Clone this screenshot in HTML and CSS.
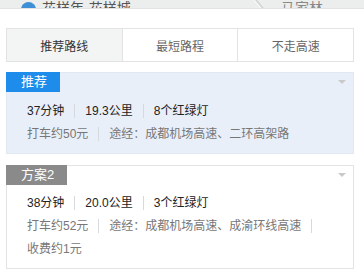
FILE: index.html
```html
<!DOCTYPE html>
<html lang="zh-CN">
<head>
  <meta charset="UTF-8">
  <meta name="viewport" content="width=device-width, initial-scale=1.0">
  <title>驾车路线</title>
  <link rel="stylesheet" href="styles.css">
</head>
<body>
  <div class="map">
    <span class="pin"></span>
    <span class="place">花样年·花样城</span>
    <span class="road"></span>
    <span class="place place-far">马家林</span>
  </div>

  <div class="panel">
    <div class="tabs">
      <div class="tab active">推荐路线</div>
      <div class="tab">最短路程</div>
      <div class="tab">不走高速</div>
    </div>

    <div class="plan plan-best">
      <span class="badge">推荐</span>
      <span class="toggle"></span>
      <div class="row main">
        <span class="item">37分钟</span><span class="item">19.3公里</span><span class="item">8个红绿灯</span>
      </div>
      <div class="row sub">
        <span class="item">打车约50元</span><span class="item">途经：成都机场高速、二环高架路</span>
      </div>
    </div>

    <div class="plan">
      <span class="badge badge-gray">方案2</span>
      <span class="toggle"></span>
      <div class="row main">
        <span class="item">38分钟</span><span class="item">20.0公里</span><span class="item">3个红绿灯</span>
      </div>
      <div class="row sub">
        <span class="item">打车约52元</span><span class="item">途经：成都机场高速、成渝环线高速</span><span class="item">收费约1元</span>
      </div>
    </div>
  </div>
</body>
</html>
```

FILE: styles.css
```css
* { margin: 0; padding: 0; box-sizing: border-box; }
body { background: #fff; color: #333; font-family: "Liberation Sans", "Noto Sans CJK SC", sans-serif; font-size: 12px; }

.map { height: 9px; overflow: hidden; background: #eceded; position: relative; border-bottom: 1px solid #e2e4e4; }
.pin { position: absolute; left: 21px; top: 2px; width: 15px; height: 15px; border-radius: 50%; background: #3d8fd6; }
.place { position: absolute; left: 42px; top: 0; font-size: 14px; line-height: 16px; color: #555; }
.place-far { left: 281px; color: #888; }
.road { position: absolute; left: 258px; top: -4px; width: 3px; height: 18px; background: #d6d8d8; border-left: 1px solid #fff; transform: rotate(-40deg); }

.panel { padding: 19px 10px 0 6px; }

.tabs { display: flex; border: 1px solid #e3e3e3; height: 34px; margin-bottom: 10px; }
.tab { flex: 1; display: flex; align-items: center; justify-content: center; color: #666; border-left: 1px solid #e3e3e3; }
.tab:first-child { border-left: none; }
.tab.active { background: #f3f4f4; color: #333; }

.plan { position: relative; border: 1px solid #e3e3e3; padding: 0 0 8px 20px; margin-bottom: 11px; }
.plan-best { background: #e9eff9; border-color: #e2e8f2; }

.badge { display: block; width: 54px; height: 20px; margin: -1px 0 7px -21px; padding-left: 15px; line-height: 20px; font-size: 13px; color: #fff; background: #1d8ceb; }
.badge-gray { width: 61px; background: #8a8a8a; }

.toggle { position: absolute; right: 7px; top: 7px; border: 4px solid transparent; border-top: 4px solid #c9c9c9; border-bottom: none; }

.row { line-height: 22px; padding-right: 20px; }
.row.main { color: #222; }
.row.sub { color: #777; }
.item { display: inline-block; vertical-align: middle; line-height: 14px; margin: 4px 10px 4px 0; padding-right: 10px; border-right: 1px solid #d6d9de; }
.item:last-child { border-right: none; margin-right: 0; padding-right: 0; }
```
